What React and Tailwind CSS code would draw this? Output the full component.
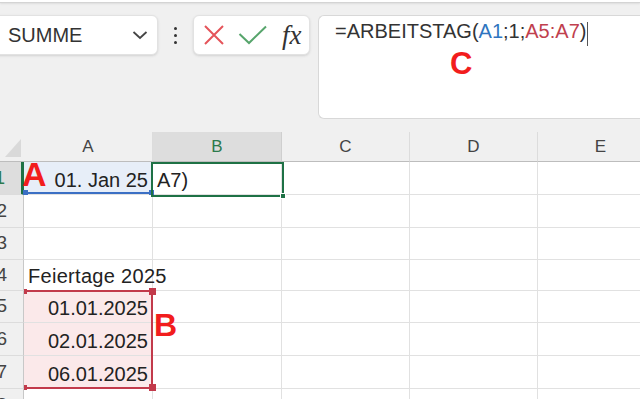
import React from 'react';

const cols = [
  { key: 'A', w: 'w-[129px]' },
  { key: 'B', w: 'w-[129px]' },
  { key: 'C', w: 'w-[128px]' },
  { key: 'D', w: 'w-[128px]' },
  { key: 'E', w: 'w-[126px]' },
];

const rows = [
  { n: 1, h: 'h-[33px]' },
  { n: 2, h: 'h-[33px]' },
  { n: 3, h: 'h-[32px]' },
  { n: 4, h: 'h-[31px]' },
  { n: 5, h: 'h-[32px]' },
  { n: 6, h: 'h-[33px]' },
  { n: 7, h: 'h-[33px]' },
  { n: 8, h: 'h-[33px]' },
];

const cellText = {
  '1A': { text: '01. Jan 25', align: 'right' },
  '1B': { text: 'A7)', align: 'left' },
  '4A': { text: 'Feiertage 2025', align: 'left' },
  '5A': { text: '01.01.2025', align: 'right' },
  '6A': { text: '02.01.2025', align: 'right' },
  '7A': { text: '06.01.2025', align: 'right' },
};

const cellBg = (r, c) => {
  if (r === 1 && c === 'A') return 'bg-[#e7eef8]';
  if (c === 'A' && r >= 5 && r <= 7) return 'bg-[#fbe9ea]';
  return 'bg-white';
};

const Toolbar = () => (
  <div className="flex items-start pt-[12px] h-[129px]">
    {/* Name box */}
    <div className="-ml-2 w-[166px] h-[40px] shrink-0 bg-white rounded-md border border-[#e2e2e2] shadow-sm flex items-center justify-between pl-[15px] pr-[8px] text-[20px] text-[#333]">
      <span>SUMME</span>
      <svg width="16" height="10" viewBox="0 0 16 10" className="mr-[1px]">
        <path d="M1.5 2 L8 8 L14.5 2" fill="none" stroke="#444" strokeWidth="1.8" />
      </svg>
    </div>

    {/* More */}
    <div className="w-[35px] h-[40px] shrink-0 flex flex-col items-center justify-center gap-[4px]">
      <span className="w-[3px] h-[3px] rounded-full bg-[#333]" />
      <span className="w-[3px] h-[3px] rounded-full bg-[#333]" />
      <span className="w-[3px] h-[3px] rounded-full bg-[#333]" />
    </div>

    {/* Cancel / Enter / fx */}
    <div className="w-[117px] h-[40px] shrink-0 bg-white rounded-md border border-[#e2e2e2] shadow-sm flex items-center pl-[9px]">
      <svg width="22" height="22" viewBox="0 0 22 22">
        <path d="M2 2 L20 20 M20 2 L2 20" stroke="#e5545a" strokeWidth="2" fill="none" />
      </svg>
      <svg width="30" height="20" viewBox="0 0 30 20" className="ml-[13px]">
        <path d="M1.5 9 L11 18 L28 1.5" stroke="#57a56c" strokeWidth="2" fill="none" />
      </svg>
      <span className="ml-[14px] font-['Liberation_Serif'] italic text-[27px] leading-none text-[#333]">fx</span>
    </div>

    {/* Formula bar */}
    <div className="ml-[8px] flex-1 h-[104px] bg-white rounded-l-md border border-r-0 border-[#d8d8d8] pl-[16px] pt-[3px] text-[20px] leading-[24px] text-[#333] flex items-start">
      <span>=ARBEITSTAG(</span>
      <span className="text-[#2f75c0]">A1</span>
      <span>;1;</span>
      <span className="text-[#c0404e]">A5:A7</span>
      <span>)</span>
      <span className="ml-[1px] mt-[3px] w-[1px] h-[24px] bg-[#555]" />
    </div>
  </div>
);

const Grid = () => (
  <div className="relative">
    {/* Column headers */}
    <div className="flex h-[30px]">
      <div className="w-[24px] shrink-0 relative border-b border-[#bdbdbd]">
        <svg width="16" height="18" viewBox="0 0 16 18" className="absolute left-[5px] top-[7px]">
          <polygon points="16,0 16,18 0,18" fill="#d9d9d9" />
        </svg>
      </div>
      {cols.map((c) => (
        <div
          key={c.key}
          className={`${c.w} shrink-0 flex items-center justify-center text-[17px] border-r border-b ${
            c.key === 'B'
              ? 'bg-[#dddddd] text-[#2d7a4c] border-r-[#cfcfcf] border-b-[#bdbdbd]'
              : 'text-[#444] border-r-[#dcdcdc] border-b-[#bdbdbd]'
          }`}
        >
          {c.key}
        </div>
      ))}
    </div>

    {/* Rows */}
    {rows.map((r) => (
      <div key={r.n} className={`flex ${r.h}`}>
        <div
          className={`w-[24px] shrink-0 flex items-center justify-end pr-[16px] text-[19px] border-b border-b-[#dcdcdc] ${
            r.n === 1
              ? 'bg-[#dddddd] text-[#2d7a4c] border-r-[3px] border-r-[#1e7145]'
              : 'text-[#444] border-r border-r-[#c8c8c8]'
          }`}
        >
          {r.n}
        </div>
        {cols.map((c) => {
          const t = cellText[`${r.n}${c.key}`];
          return (
            <div
              key={c.key}
              className={`${c.w} shrink-0 flex items-end pb-[2px] border-r border-b border-[#e1e1e1] text-[20px] leading-[24px] text-[#222] whitespace-nowrap ${cellBg(
                r.n,
                c.key
              )} ${t && t.align === 'right' ? 'justify-end pr-[4px]' : 'pl-[4px]'}`}
            >
              {t && <span className={t.text === 'Feiertage 2025' ? 'relative z-10 tracking-[0.3px]' : ''}>{t.text}</span>}
            </div>
          );
        })}
      </div>
    ))}

    {/* A1 reference highlight (blue) */}
    <div className="absolute left-[26px] top-[60px] w-[126px] h-[2px] bg-[#3b6fc4]" />
    <div className="absolute left-[23px] top-[58px] w-[5px] h-[5px] bg-[#3b6fc4]" />
    <div className="absolute left-[149px] top-[58px] w-[5px] h-[5px] bg-[#3b6fc4]" />

    {/* Active cell B1 (green) */}
    <div className="absolute left-[151px] top-[30px] w-[133px] h-[35px] border-2 border-[#1e7145]" />
    <div className="absolute left-[280px] top-[61px] w-[6px] h-[6px] bg-[#1e7145] border border-white" />

    {/* A5:A7 reference highlight (red) */}
    <div className="absolute left-[27px] top-[158px] w-[125px] h-[2px] bg-[#c23a4b]" />
    <div className="absolute left-[27px] top-[255px] w-[125px] h-[2px] bg-[#c23a4b]" />
    <div className="absolute left-[151px] top-[158px] w-[2px] h-[99px] bg-[#c23a4b]" />
    <div className="absolute left-[24px] top-[157px] w-[3px] h-[5px] bg-[#c23a4b]" />
    <div className="absolute left-[24px] top-[253px] w-[3px] h-[5px] bg-[#c23a4b]" />
    <div className="absolute left-[149px] top-[156px] w-[7px] h-[7px] bg-[#c23a4b]" />
    <div className="absolute left-[149px] top-[252px] w-[7px] h-[7px] bg-[#c23a4b]" />
  </div>
);

export default function App() {
  return (
    <div className="relative w-[640px] h-[399px] overflow-hidden bg-[#f0f0f0] font-['Liberation_Sans',Arial,sans-serif]">
      {/* top window edge */}
      <div className="h-[3px] bg-white border-b border-[#d4d4d4] shadow-[0_1px_2px_rgba(0,0,0,0.08)]" />
      <Toolbar />
      <Grid />

      {/* Annotations */}
      <span className="absolute left-[450px] top-[48px] text-[31px] leading-none font-bold text-[#f21d1d]">C</span>
      <span className="absolute left-[22px] top-[157px] text-[34px] leading-none font-bold text-[#f21d1d]">A</span>
      <span className="absolute left-[154px] top-[309px] text-[32px] leading-none font-bold text-[#f21d1d]">B</span>
    </div>
  );
}
